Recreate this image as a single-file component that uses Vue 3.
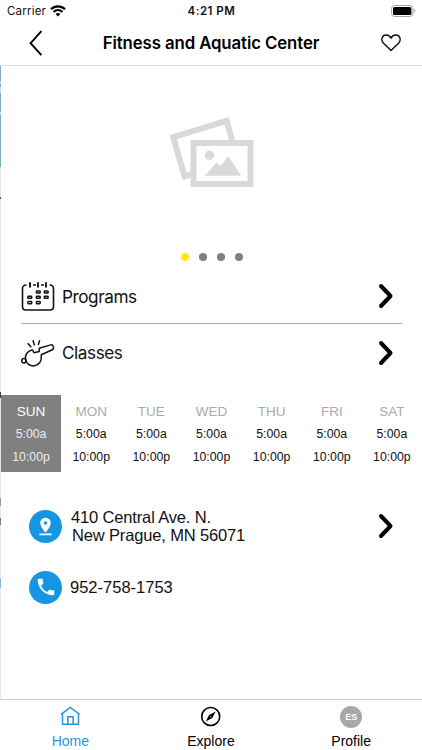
<template>
    <div class="screen">
        <header class="top">
            <div class="status-bar">
                <div class="carrier">
                    <span>Carrier</span>
                    <svg width="16" height="12" viewBox="0 0 16 12">
                        <path d="M1 4.3C5 .4 11 .4 15 4.3" fill="none" stroke="#000" stroke-width="2.2" />
                        <path d="M3.5 7C6.2 4.4 9.8 4.4 12.5 7" fill="none" stroke="#000" stroke-width="2" />
                        <path d="M5.6 8.9C7 7.6 9 7.6 10.4 8.9L8 11.4Z" />
                    </svg>
                </div>
                <span class="time">4:21 PM</span>
                <svg class="battery" width="25" height="12" viewBox="0 0 25 12">
                    <rect x=".5" y=".5" width="21.4" height="11" rx="3" fill="#fff" stroke="#a5a5a5" />
                    <rect x="2" y="2" width="18.4" height="8" rx="1.6" />
                    <path d="M23.2 4v4c1.5-.6 1.5-3.4 0-4z" fill="#a5a5a5" />
                </svg>
            </div>
            <div class="nav-bar">
                <button class="back">
                    <svg width="14" height="27" viewBox="0 0 14 27">
                        <path d="M12.4 1.2L1.6 13.2 12.4 25.2" fill="none" stroke="#000" stroke-width="1.9" />
                    </svg>
                </button>
                <h1>Fitness and Aquatic Center</h1>
                <button class="favorite">
                    <svg width="20" height="18" viewBox="0 0 20 18">
                        <path d="M10 16.6L2.5 9.2C-.8 5.6 1.3 1 5.2 1 7.6 1 9.2 2.3 10 4.2 10.8 2.3 12.4 1 14.8 1 18.7 1 20.8 5.6 17.5 9.2Z" fill="none" stroke="#111" stroke-width="1.4" stroke-linejoin="round" />
                    </svg>
                </button>
            </div>
        </header>

        <main>
            <section class="hero">
                <svg class="placeholder" width="86" height="72" viewBox="0 0 86 72">
                    <g fill="none" stroke="#d9d9d9" stroke-width="6">
                        <path d="M23.5 57.3L15.6 59.3 4.2 20.2 57.6 3.8 63.3 24" />
                        <rect x="24.5" y="26" width="57" height="41" />
                    </g>
                    <circle cx="40.5" cy="38.3" r="4.7" fill="#d9d9d9" />
                    <path d="M35.7 58.7L47.7 45.5 51.5 49.3 59.4 39 72.2 58.7Z" fill="#d9d9d9" />
                </svg>
                <div class="dots">
                    <span v-for="n in 4" :key="n" :class="{ active: n === 1 }"></span>
                </div>
            </section>

            <ul class="links">
                <li>
                    <svg class="link-icon" width="34" height="30" viewBox="0 0 34 30">
                        <g fill="none" stroke="#111" stroke-width="1.6">
                            <path d="M5.5 4H5C3 4 1.5 5.5 1.5 7.5V25.5C1.5 27.5 3 29 5 29H29C31 29 32.5 27.5 32.5 25.5V7.5C32.5 5.5 31 4 29 4H28.5" />
                            <path d="M12 4H15M20 4H23" />
                            <path d="M9 1.3V6.5M17 1.3V6.5M25 1.3V6.5" stroke-width="1.9" />
                            <rect v-for="cell in calendarCells" :key="cell.join()" :x="cell[0]" :y="cell[1]" width="3.8" height="2.1" rx=".6" stroke-width="1.5" />
                        </g>
                    </svg>
                    <span class="link-label">Programs</span>
                    <svg class="chevron" width="16" height="26" viewBox="0 0 16 26"><path d="M3 3L12.5 13 3 23" /></svg>
                </li>
                <li>
                    <svg class="link-icon" width="34" height="32" viewBox="0 0 34 32">
                        <g fill="none" stroke="#111" stroke-width="1.5" stroke-linejoin="round">
                            <path d="M11 13A8 8 0 1 0 20.3 20V17.8L31.3 12.8C32.6 12.2 32.7 10.900 32.3 9.500 31.8 7.900 31 7.500 29.700 7.900L18.300 11.300V14.500L12.800 15.700 12 13.600C11.800 13.100 11.500 12.900 11 13Z" />
                            <circle cx="2.9" cy="23.7" r="2.2" />
                            <path d="M6.7 6.3L10.3 10.200M11.900 3.300L13.600 8.400M18.700 3.300L17.200 8" />
                        </g>
                    </svg>
                    <span class="link-label">Classes</span>
                    <svg class="chevron" width="16" height="26" viewBox="0 0 16 26"><path d="M3 3L12.5 13 3 23" /></svg>
                </li>
            </ul>

            <section class="hours">
                <div v-for="day in days" :key="day" class="day" :class="{ today: day === 'SUN' }">
                    <span class="day-name">{{ day }}</span>
                    <span>5:00a</span>
                    <span>10:00p</span>
                </div>
            </section>

            <section class="contact">
                <div class="contact-row address">
                    <span class="badge">
                        <svg width="21" height="21" viewBox="0 0 24 24">
                            <path fill="#fff" d="M18 8c0-3.31-2.69-6-6-6S6 4.69 6 8c0 4.5 6 11 6 11s6-6.500 6-11zm-8 0c0-1.100.9-2 2-2s2 .9 2 2-.89 2-2 2c-1.100 0-2-.9-2-2zM5 20v2h14v-2H5z" />
                        </svg>
                    </span>
                    <p>410 Central Ave. N.<br><span class="city">New Prague, MN 56071</span></p>
                    <svg class="chevron" width="16" height="26" viewBox="0 0 16 26"><path d="M3 3L12.5 13 3 23" /></svg>
                </div>
                <div class="contact-row phone">
                    <span class="badge">
                        <svg width="22" height="22" viewBox="0 0 24 24">
                            <path fill="#fff" d="M6.620 10.790c1.440 2.830 3.760 5.140 6.590 6.590l2.200-2.200c.27-.27.67-.36 1.020-.24 1.120.37 2.330.57 3.570.57.550 0 1 .45 1 1V20c0 .55-.45 1-1 1-9.390 0-17-7.610-17-17 0-.55.45-1 1-1h3.500c.55 0 1 .45 1 1 0 1.250.2 2.450.57 3.570.11.350.03.740-.25 1.020l-2.200 2.200z" />
                        </svg>
                    </span>
                    <p>952-758-1753</p>
                </div>
            </section>
        </main>

        <nav class="tab-bar">
            <a class="tab selected">
                <svg width="22" height="22" viewBox="0 0 22 22">
                    <path d="M2 8.3L11.3 1.5 20.600 8.300M3.500 7.500V18.300H8.800V10.800H14.100V18.300H19.500V7.500M8.800 18.300H14.100" fill="none" stroke="#2497df" stroke-width="1.5" />
                </svg>
                <span>Home</span>
            </a>
            <a class="tab">
                <svg width="22" height="22" viewBox="0 0 22 22">
                    <circle cx="10.700" cy="10.500" r="9" fill="none" stroke="#000" stroke-width="1.6" />
                    <path d="M15.700 5.500L12.300 12.100 5.700 15.500 9.100 8.900Z" />
                    <circle cx="10.700" cy="10.500" r=".6" fill="#fff" />
                </svg>
                <span>Explore</span>
            </a>
            <a class="tab">
                <span class="avatar">ES</span>
                <span>Profile</span>
            </a>
        </nav>
    </div>
</template>

<script setup>
const days = ['SUN', 'MON', 'TUE', 'WED', 'THU', 'FRI', 'SAT'];

// x, y of each date box in the calendar icon
const calendarCells = [
    [15.4, 9.9],
    [23.3, 9.9],
    [6.9, 15.2],
    [15.4, 15.2],
    [23.3, 15.2],
    [6.9, 20.6],
    [15.4, 20.6],
];
</script>

<style>
body {
    margin: 0;
    background: #fff;
}
</style>

<style scoped>
.screen {
    display: flex;
    flex-direction: column;
    width: 422px;
    height: 750px;
    overflow: hidden;
    color: #111;
    font-family: "Liberation Sans", Arial, sans-serif;
}

.screen svg {
    display: block;
    flex: none;
}

.top {
    height: 65px;
    border-bottom: 1px solid #dedede;
    font-family: Inter, "Liberation Sans", sans-serif;
}

.status-bar {
    display: grid;
    grid-template-columns: 1fr auto 1fr;
    align-items: center;
    height: 21px;
    padding: 0 6px 0 7px;
    font-size: 11.5px;
}

.carrier {
    display: flex;
    align-items: center;
    gap: 4px;
    letter-spacing: 0.2px;
}

.time {
    font-weight: 600;
    letter-spacing: 0.5px;
}

.battery {
    justify-self: end;
}

.nav-bar {
    display: flex;
    align-items: center;
    justify-content: space-between;
    height: 44px;
    padding: 0 21px 0 29px;
}

.nav-bar button {
    padding: 0;
    border: none;
    background: none;
}

.nav-bar h1 {
    margin: 0 2px 0 0;
    color: #000;
    font-size: 16.8px;
    font-weight: 600;
    letter-spacing: -0.1px;
}

main {
    flex: 1;
    padding-left: 1px;
    /* edge of the previous page showing at the left */
    background: linear-gradient(#7eacc4 0 15px, #c4dfea 15px 18px, #7eacc4 18px 21px, #c4dfea 21px 27px, #7eacc4 27px 46px, #c4dfea 46px 49px, #7eacc4 49px 101px, #e8e8e8 101px 131px, #555 131px 133px, #e8e8e8 133px 326px, #444 326px 332px, #e8e8e8 332px 432px, #999 432px 440px, #e8e8e8 440px 452px, #777 452px 459px, #e8e8e8 459px 512px, #8abddd 512px 522px, #e8e8e8 522px) no-repeat 0 0 / 1px 100%;
}

.hero {
    display: flex;
    flex-direction: column;
    align-items: center;
    gap: 64px;
    height: 152px;
    padding-top: 51px;
}

.dots {
    display: flex;
    gap: 10px;
}

.dots span {
    width: 8px;
    height: 8px;
    border-radius: 50%;
    background: #808080;
}

.dots .active {
    background: #ffe912;
}

.links {
    margin: 0;
    padding: 0 20px;
    list-style: none;
}

.links li {
    display: flex;
    align-items: center;
    height: 54px;
    font-family: Inter, "Liberation Sans", sans-serif;
    font-size: 17.2px;
}

.links li + li {
    height: 57px;
    border-top: 1px solid #aaa;
}

.link-label {
    flex: 1;
    margin-left: 7px;
    letter-spacing: -0.45px;
}

.chevron {
    fill: none;
    stroke: #000;
    stroke-width: 4;
    stroke-linecap: round;
    stroke-linejoin: round;
}

.links .chevron {
    margin-right: 8px;
}

.hours {
    display: grid;
    grid-template-columns: repeat(7, 1fr);
    height: 77px;
    margin-top: 14px;
}

.day {
    display: flex;
    flex-direction: column;
    align-items: center;
    padding-top: 5px;
    font-size: 12.3px;
    line-height: 23px;
}

.day-name {
    color: #aaa;
    font-size: 13.5px;
}

.today {
    background: #808080;
    color: #eee;
}

.today .day-name {
    color: #fff;
}

.contact {
    padding: 34px 28px 0;
}

.contact-row {
    display: flex;
    align-items: center;
    height: 40px;
}

.contact-row p {
    flex: 1;
    margin: 0 0 0 9px;
    font-size: 16.5px;
    line-height: 18px;
}

.address p {
    letter-spacing: -0.15px;
}

.phone {
    margin-top: 21px;
}

.phone p {
    margin-left: 8px;
}

.city {
    margin-left: 1px;
}

.badge {
    display: flex;
    align-items: center;
    justify-content: center;
    width: 33px;
    height: 33px;
    border-radius: 50%;
    background: #1696e2;
}

.tab-bar {
    display: grid;
    grid-template-columns: repeat(3, 1fr);
    height: 50px;
    border-top: 1px solid #ccc;
    background: #fff;
}

.tab {
    display: flex;
    flex-direction: column;
    align-items: center;
    gap: 5px;
    padding-top: 6px;
    color: #000;
    font-size: 14px;
    line-height: 17px;
}

.tab:last-child {
    padding-right: 1px;
}

.selected {
    color: #2497df;
}

.avatar {
    width: 22px;
    height: 22px;
    border-radius: 50%;
    background: #a8a8a8;
    color: #fff;
    font-size: 9px;
    font-weight: bold;
    line-height: 22px;
    text-align: center;
}
</style>
